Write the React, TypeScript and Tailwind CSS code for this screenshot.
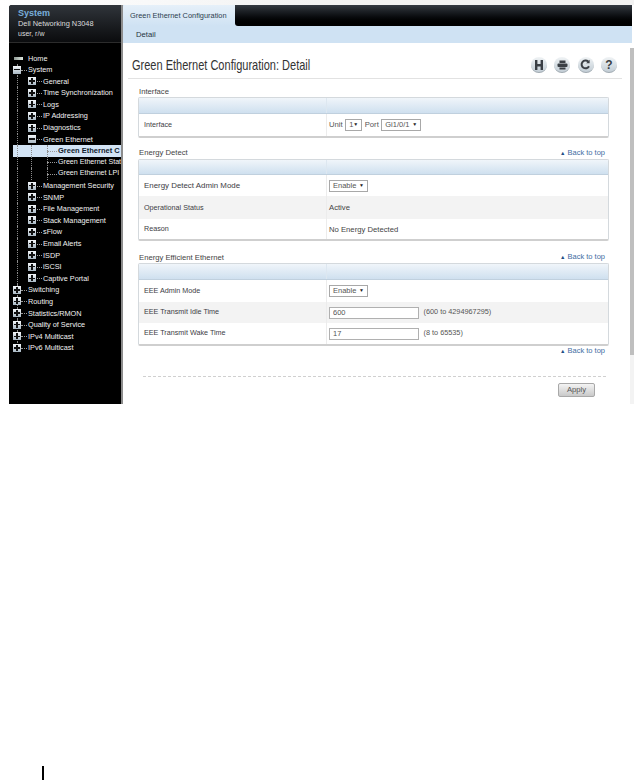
import React from "react";

type Node = { label: string; x: number; box?: "plus" | "minus" | "home"; guides: number[]; dash?: [number, number]; sel?: boolean; top?: boolean };

const l1 = (label: string, box: "plus" | "minus"): Node => ({ label, x: 43, box, guides: [17], dash: [35, 43] });
const l0 = (label: string, guides = [17]): Node => ({ label, x: 28, box: "plus", guides, dash: [21, 28], top: true });
const l2 = (label: string, sel = false): Node => ({ label, x: 58, guides: [17, 31, 47], dash: [47, 58], sel });

const tree: Node[] = [
  { label: "Home", x: 28, box: "home", guides: [] },
  { label: "System", x: 28, box: "minus", guides: [17], dash: [21, 28], top: true },
  l1("General", "plus"),
  l1("Time Synchronization", "plus"),
  l1("Logs", "plus"),
  l1("IP Addressing", "plus"),
  l1("Diagnostics", "plus"),
  l1("Green Ethernet", "minus"),
  l2("Green Ethernet C", true),
  l2("Green Ethernet Stat"),
  l2("Green Ethernet LPI"),
  l1("Management Security", "plus"),
  l1("SNMP", "plus"),
  l1("File Management", "plus"),
  l1("Stack Management", "plus"),
  l1("sFlow", "plus"),
  l1("Email Alerts", "plus"),
  l1("ISDP", "plus"),
  l1("iSCSI", "plus"),
  l1("Captive Portal", "plus"),
  l0("Switching"),
  l0("Routing"),
  l0("Statistics/RMON"),
  l0("Quality of Service"),
  l0("IPv4 Multicast"),
  l0("IPv6 Multicast"),
];

function TreeBox({ kind, left }: { kind: "plus" | "minus"; left: number }) {
  return (
    <span style={{ left }} className="absolute top-[1.5px] w-[8px] h-[8px] bg-gradient-to-b from-[#f4f7fa] to-[#a9b8c4] flex items-center justify-center z-10">
      <span className="absolute w-[6px] h-[1.5px] bg-[#111]" />
      {kind === "plus" && <span className="absolute w-[1.5px] h-[6px] bg-[#111]" />}
    </span>
  );
}

function TreeRow({ node, index }: { node: Node; index: number }) {
  const isLast = index === tree.length - 1;
  return (
    <div className={`relative h-[11.6px] ${node.sel ? "bg-[#d3e4f5]" : ""}`}>
      {node.guides.map((g) => (
        <span
          key={g}
          style={{ left: g - 13 }}
          className={`absolute top-0 border-l border-dotted border-[#8a8a8a] ${isLast && g === 17 ? "h-[5px]" : "h-full"}`}
        />
      ))}
      {node.dash && (
        <span style={{ left: node.dash[0] - 13, width: node.dash[1] - node.dash[0] - 1 }} className="absolute top-[5.5px] border-t border-dotted border-[#9a9a9a]" />
      )}
      {node.box === "home" && <span className="absolute left-[1px] top-[4px] w-[9px] h-[3px] bg-gradient-to-r from-[#8f9a94] to-[#dfe8e0]" />}
      {(node.box === "plus" || node.box === "minus") && <TreeBox kind={node.box} left={node.x === 43 ? 15 : 0} />}
      <span
        style={{ left: node.x - 13 }}
        className={`absolute top-0 leading-[11.6px] whitespace-nowrap ${node.sel ? "text-[7.5px] text-[#10202e] font-bold" : node.x === 58 ? "text-[7.1px] text-[#f2f2f2]" : "text-[7.3px] text-[#f2f2f2]"}`}
      >
        {node.label}
      </span>
    </div>
  );
}

function Sidebar() {
  return (
    <div className="w-[112px] h-full bg-black rounded-tl-[3px] flex flex-col shrink-0 overflow-hidden">
      <div className="h-[38px] shrink-0 bg-gradient-to-b from-[#30353b] to-[#0b0c0e] border-b border-[#2c2c2c] pl-[9px] pt-[3px] text-[#dcdcdc]">
        <div className="text-[#78aedb] font-bold text-[9px] leading-[11px]">System</div>
        <div className="text-[7.4px] leading-[9.5px] mt-[-0.5px]">Dell Networking N3048</div>
        <div className="text-[7px] leading-[9px] mt-px">user, r/w</div>
      </div>
      <div className="pl-[4px] pt-[9.5px]">
        {tree.map((n, i) => (
          <TreeRow key={n.label} node={n} index={i} />
        ))}
      </div>
    </div>
  );
}

function Round({ children }: { children: React.ReactNode }) {
  return (
    <span className="relative w-[16px] h-[16px] rounded-full bg-gradient-to-b from-[#f0f3f5] to-[#c3ced6] flex items-center justify-center text-[#3a3f45] font-bold text-[12px] leading-none border-b border-[#9fa9b0]">
      {children}
    </span>
  );
}

function ToolIcons() {
  return (
    <div className="flex gap-[7.5px] items-center">
      <Round>
        <svg width="10" height="12" viewBox="0 0 10 12" fill="#3a3f45">
          <path d="M1 1h2.4v4h3.2V1H9v10H6.6V7.5H3.4V11H1z" />
        </svg>
      </Round>
      <Round>
        <svg width="11" height="10" viewBox="0 0 11 10" fill="#3a3f45">
          <rect x="2.5" y="0.5" width="6" height="2.5" />
          <rect x="0.5" y="3.5" width="10" height="3.5" rx="1" />
          <rect x="2.5" y="7.5" width="6" height="2" />
        </svg>
      </Round>
      <Round>
        <svg width="11" height="11" viewBox="0 0 11 11" fill="none" stroke="#3a3f45" strokeWidth="2">
          <path d="M9 7.2A3.9 3.9 0 1 1 8.2 2.6" />
          <path d="M9.6 0.8v3.4H6.2" fill="#3a3f45" stroke="none" />
        </svg>
      </Round>
      <Round>?</Round>
    </div>
  );
}

function Select({ value, w }: { value: string; w: string }) {
  return (
    <span className={`inline-flex items-center justify-between h-[12px] border border-[#a8a8a8] bg-white px-[3px] text-[7.5px] text-[#555] ${w}`}>
      <span>{value}</span>
      <span className="text-[5px] text-[#222]">▼</span>
    </span>
  );
}

function Field({ value }: { value: string }) {
  return <input readOnly value={value} className="w-[90px] h-[12px] border border-[#b0b0b0] bg-white px-[3px] text-[7.5px] text-[#555] outline-none" />;
}

function Row({ label, gray, children, h, wide }: { label: string; gray?: boolean; children: React.ReactNode; h: string; wide?: boolean }) {
  return (
    <div className={`flex items-center ${h} ${gray ? "bg-[#f3f3f3]" : "bg-white"}`}>
      <div className={`w-[188px] pl-[5px] pt-px h-full flex items-center border-r border-[#ececec] text-[#3c3c44] shrink-0 ${wide ? "text-[7.9px]" : "text-[7.2px]"}`}>{label}</div>
      <div className="pl-[2px] pt-px flex items-center gap-[2.5px] text-[#555] text-[7.7px]">{children}</div>
    </div>
  );
}

function Panel({ children }: { children: React.ReactNode }) {
  return (
    <div className="border border-[#d4d9dd] border-b-[2px] border-b-[#cfcfcf] rounded-[2px] bg-white">
      <div className="flex h-[15.5px] bg-gradient-to-b from-[#f0f5fa] to-[#cfe0ef] border-b border-[#c0d0de]">
        <div className="w-[188px] border-r border-[#dde7f0]" />
      </div>
      {children}
    </div>
  );
}

function BackToTop() {
  return (
    <a className="flex items-center justify-end gap-[2px] pr-[4px] text-[#3f6ea3] text-[7.5px] leading-[10px]">
      <span className="text-[5.5px] text-[#1f4f86]">▲</span>
      Back to top
    </a>
  );
}

function Section({ title, back, children }: { title: string; back?: boolean; children: React.ReactNode }) {
  return (
    <div>
      <div className="flex justify-between items-center h-[12px] pl-[1px]">
        <span className="text-[7.7px] text-[#444] pt-px">{title}</span>
        {back && <BackToTop />}
      </div>
      {children}
    </div>
  );
}

export default function App() {
  return (
    <div className="h-[780px] bg-white relative overflow-hidden antialiased" style={{ fontFamily: '"Liberation Sans", Arial, sans-serif' }}>
      <div className="h-[404px] flex w-[634px] pt-[5px] pl-[9px] bg-gradient-to-r from-white via-[#f2f2f2] to-[#f2f2f2] text-[8px]">
        <Sidebar />
        <div className="w-[2px] bg-[#8c8c8c] shrink-0" />
        <div className="flex-1 flex flex-col min-w-0 bg-white">
          <div className="h-[21px] flex shrink-0 mr-[2px] bg-[#cfe2f3]">
            <div className="w-[112px] pl-[7px] pt-[5px] text-[7.4px] text-[#2c3e4e] bg-gradient-to-b from-[#e6f0f9] to-[#cfe2f3] rounded-tl-[2px] whitespace-nowrap">Green Ethernet Configuration</div>
            <div className="flex-1 bg-gradient-to-b from-[#343a42] to-black rounded-bl-[3px]" />
          </div>
          <div className="h-[17px] shrink-0 mr-[2px] bg-[#cfe2f3] pl-[13px] pt-[3px] text-[7.7px] text-[#26343f]">Detail</div>
          <div className="flex-1 flex min-h-0">
            <div className="flex-1 min-w-0 pl-[5px] pr-[1px]">
              <div className="h-[36px] border-b border-[#e2e2e2] flex items-center justify-between pl-[4px] pr-[5px]">
                <h1 className="text-[14.5px] text-[#333] whitespace-nowrap scale-x-[0.76] origin-left pt-[10px]">Green Ethernet Configuration: Detail</h1>
                <div className="pt-[9px]">
                  <ToolIcons />
                </div>
              </div>
              <div className="pl-[10px] pr-[13px] pt-[6px]">
                <Section title="Interface">
                  <Panel>
                    <Row label="Interface" h="h-[22px]">
                      <span>Unit</span>
                      <Select value="1" w="w-[17px]" />
                      <span>Port</span>
                      <Select value="Gi1/0/1" w="w-[40px]" />
                    </Row>
                  </Panel>
                </Section>
                <div className="mt-[9px]">
                  <Section title="Energy Detect" back>
                    <Panel>
                      <Row label="Energy Detect Admin Mode" h="h-[21px]" wide>
                        <Select value="Enable" w="w-[39px]" />
                      </Row>
                      <Row label="Operational Status" gray h="h-[23px]">
                        <span className="text-[#444]">Active</span>
                      </Row>
                      <Row label="Reason" h="h-[20px]">
                        <span className="text-[#444]">No Energy Detected</span>
                      </Row>
                    </Panel>
                  </Section>
                </div>
                <div className="mt-[10px]">
                  <Section title="Energy Efficient Ethernet" back>
                    <Panel>
                      <Row label="EEE Admin Mode" h="h-[22px]">
                        <Select value="Enable" w="w-[39px]" />
                      </Row>
                      <Row label="EEE Transmit Idle Time" gray h="h-[21px]">
                        <Field value="600" />
                        <span className="ml-[2px] text-[7.3px]">(600 to 4294967295)</span>
                      </Row>
                      <Row label="EEE Transmit Wake Time" h="h-[21px]">
                        <Field value="17" />
                        <span className="ml-[2px] text-[7.3px]">(8 to 65535)</span>
                      </Row>
                    </Panel>
                    <BackToTop />
                  </Section>
                </div>
                <div className="mt-[20px] ml-[5px] mr-[3px] border-t border-dashed border-[#d0d0d0] flex justify-end pt-[6px] pr-[11px]">
                  <button className="w-[37px] h-[14px] rounded-[2px] border border-[#a8a8a8] bg-gradient-to-b from-[#f4f4f4] to-[#c9c9c9] text-[7.7px] text-[#555]">Apply</button>
                </div>
              </div>
            </div>
            <div className="w-[11px] shrink-0 flex flex-col bg-white">
              <div className="h-[5px]" />
              <div className="ml-[7px] w-[4px] h-[307px] bg-[#bfbfbf]" />
              <div className="ml-[7px] w-[4px] flex-1 bg-[#f3f3f3]" />
            </div>
          </div>
        </div>
      </div>
      <span className="absolute left-[42px] top-[766px] w-[2px] h-[14px] bg-black" />
    </div>
  );
}
